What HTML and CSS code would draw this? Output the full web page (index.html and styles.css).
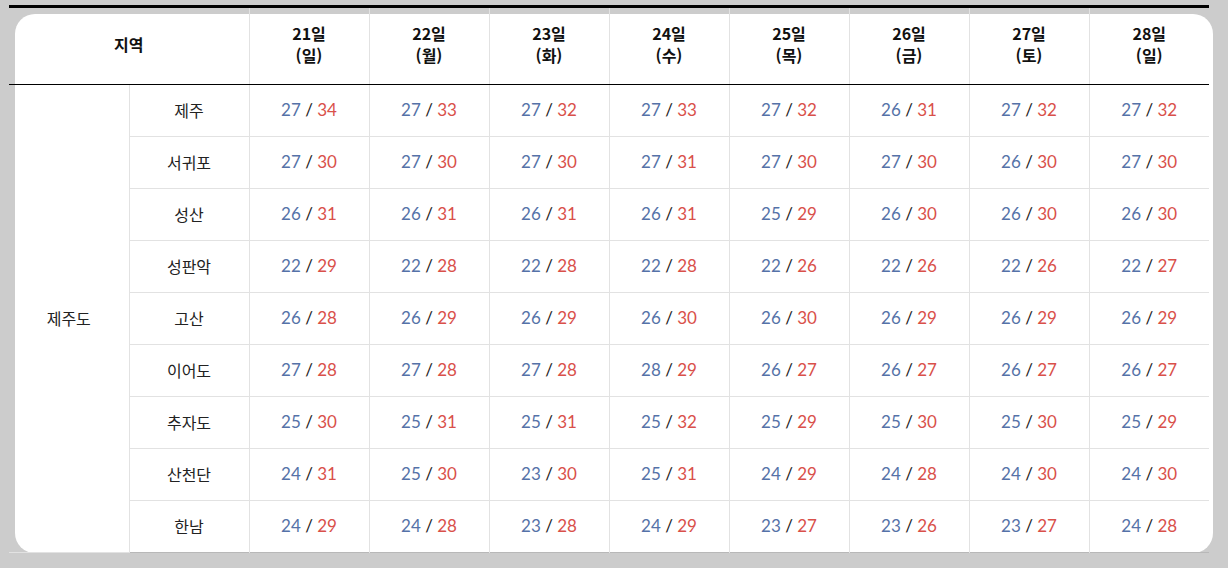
FILE: index.html
```html
<!DOCTYPE html>
<html lang="ko">
<head>
  <meta charset="UTF-8" />
  <meta name="viewport" content="width=device-width, initial-scale=1" />
  <title>제주도 기온 예보</title>
  <link rel="stylesheet" href="styles.css">
</head>
<body>
  <div class="board">
    <table class="forecast">
      <thead>
        <tr>
          <th colspan="2">지역</th>
          <th>21일<br>(일)</th>
          <th>22일<br>(월)</th>
          <th>23일<br>(화)</th>
          <th>24일<br>(수)</th>
          <th>25일<br>(목)</th>
          <th>26일<br>(금)</th>
          <th>27일<br>(토)</th>
          <th>28일<br>(일)</th>
        </tr>
      </thead>
      <tbody>
        <tr>
          <td class="area" rowspan="9">제주도</td>
          <td class="place">제주</td>
          <td><span class="lo">27</span> / <span class="hi">34</span></td>
          <td><span class="lo">27</span> / <span class="hi">33</span></td>
          <td><span class="lo">27</span> / <span class="hi">32</span></td>
          <td><span class="lo">27</span> / <span class="hi">33</span></td>
          <td><span class="lo">27</span> / <span class="hi">32</span></td>
          <td><span class="lo">26</span> / <span class="hi">31</span></td>
          <td><span class="lo">27</span> / <span class="hi">32</span></td>
          <td><span class="lo">27</span> / <span class="hi">32</span></td>
        </tr>
        <tr>
          <td class="place">서귀포</td>
          <td><span class="lo">27</span> / <span class="hi">30</span></td>
          <td><span class="lo">27</span> / <span class="hi">30</span></td>
          <td><span class="lo">27</span> / <span class="hi">30</span></td>
          <td><span class="lo">27</span> / <span class="hi">31</span></td>
          <td><span class="lo">27</span> / <span class="hi">30</span></td>
          <td><span class="lo">27</span> / <span class="hi">30</span></td>
          <td><span class="lo">26</span> / <span class="hi">30</span></td>
          <td><span class="lo">27</span> / <span class="hi">30</span></td>
        </tr>
        <tr>
          <td class="place">성산</td>
          <td><span class="lo">26</span> / <span class="hi">31</span></td>
          <td><span class="lo">26</span> / <span class="hi">31</span></td>
          <td><span class="lo">26</span> / <span class="hi">31</span></td>
          <td><span class="lo">26</span> / <span class="hi">31</span></td>
          <td><span class="lo">25</span> / <span class="hi">29</span></td>
          <td><span class="lo">26</span> / <span class="hi">30</span></td>
          <td><span class="lo">26</span> / <span class="hi">30</span></td>
          <td><span class="lo">26</span> / <span class="hi">30</span></td>
        </tr>
        <tr>
          <td class="place">성판악</td>
          <td><span class="lo">22</span> / <span class="hi">29</span></td>
          <td><span class="lo">22</span> / <span class="hi">28</span></td>
          <td><span class="lo">22</span> / <span class="hi">28</span></td>
          <td><span class="lo">22</span> / <span class="hi">28</span></td>
          <td><span class="lo">22</span> / <span class="hi">26</span></td>
          <td><span class="lo">22</span> / <span class="hi">26</span></td>
          <td><span class="lo">22</span> / <span class="hi">26</span></td>
          <td><span class="lo">22</span> / <span class="hi">27</span></td>
        </tr>
        <tr>
          <td class="place">고산</td>
          <td><span class="lo">26</span> / <span class="hi">28</span></td>
          <td><span class="lo">26</span> / <span class="hi">29</span></td>
          <td><span class="lo">26</span> / <span class="hi">29</span></td>
          <td><span class="lo">26</span> / <span class="hi">30</span></td>
          <td><span class="lo">26</span> / <span class="hi">30</span></td>
          <td><span class="lo">26</span> / <span class="hi">29</span></td>
          <td><span class="lo">26</span> / <span class="hi">29</span></td>
          <td><span class="lo">26</span> / <span class="hi">29</span></td>
        </tr>
        <tr>
          <td class="place">이어도</td>
          <td><span class="lo">27</span> / <span class="hi">28</span></td>
          <td><span class="lo">27</span> / <span class="hi">28</span></td>
          <td><span class="lo">27</span> / <span class="hi">28</span></td>
          <td><span class="lo">28</span> / <span class="hi">29</span></td>
          <td><span class="lo">26</span> / <span class="hi">27</span></td>
          <td><span class="lo">26</span> / <span class="hi">27</span></td>
          <td><span class="lo">26</span> / <span class="hi">27</span></td>
          <td><span class="lo">26</span> / <span class="hi">27</span></td>
        </tr>
        <tr>
          <td class="place">추자도</td>
          <td><span class="lo">25</span> / <span class="hi">30</span></td>
          <td><span class="lo">25</span> / <span class="hi">31</span></td>
          <td><span class="lo">25</span> / <span class="hi">31</span></td>
          <td><span class="lo">25</span> / <span class="hi">32</span></td>
          <td><span class="lo">25</span> / <span class="hi">29</span></td>
          <td><span class="lo">25</span> / <span class="hi">30</span></td>
          <td><span class="lo">25</span> / <span class="hi">30</span></td>
          <td><span class="lo">25</span> / <span class="hi">29</span></td>
        </tr>
        <tr>
          <td class="place">산천단</td>
          <td><span class="lo">24</span> / <span class="hi">31</span></td>
          <td><span class="lo">25</span> / <span class="hi">30</span></td>
          <td><span class="lo">23</span> / <span class="hi">30</span></td>
          <td><span class="lo">25</span> / <span class="hi">31</span></td>
          <td><span class="lo">24</span> / <span class="hi">29</span></td>
          <td><span class="lo">24</span> / <span class="hi">28</span></td>
          <td><span class="lo">24</span> / <span class="hi">30</span></td>
          <td><span class="lo">24</span> / <span class="hi">30</span></td>
        </tr>
        <tr>
          <td class="place">한남</td>
          <td><span class="lo">24</span> / <span class="hi">29</span></td>
          <td><span class="lo">24</span> / <span class="hi">28</span></td>
          <td><span class="lo">23</span> / <span class="hi">28</span></td>
          <td><span class="lo">24</span> / <span class="hi">29</span></td>
          <td><span class="lo">23</span> / <span class="hi">27</span></td>
          <td><span class="lo">23</span> / <span class="hi">26</span></td>
          <td><span class="lo">23</span> / <span class="hi">27</span></td>
          <td><span class="lo">24</span> / <span class="hi">28</span></td>
        </tr>
      </tbody>
    </table>
  </div>
</body>
</html>
```

FILE: styles.css
```css
body {
  margin: 0;
  padding: 5px 0 0 9px;
  background: #cccccc;
  font-family: 'Noto Sans CJK KR', 'Noto Sans', sans-serif;
  color: #111;
}
.board {
  position: relative;
  width: 1200px;
  isolation: isolate;
}
/* white card sitting behind the table */
.board::before {
  content: '';
  position: absolute;
  left: 6px;
  top: 9px;
  width: 1198px;
  height: 539px;
  background: #fff;
  border-radius: 20px;
  z-index: -1;
}
.forecast {
  width: 1200px;
  table-layout: fixed;
  border-collapse: collapse;
  border-top: 3px solid #000;
  border-bottom: 1px solid #b8b8b8;
}
.forecast th {
  height: 72px;
  padding: 0 0 4px;
  font-size: 16px;
  font-weight: 700;
  line-height: 22px;
  border-bottom: 1px solid #000;
  border-left: 1px solid #e2e2e2;
}
.forecast th:first-child {
  border-left: none;
}
.forecast td {
  height: 49px;
  padding: 0 0 2px;
  text-align: center;
  font-family: Lato, 'Noto Sans', sans-serif;
  font-size: 17px;
  color: #222;
  border: 1px solid #e2e2e2;
  border-right: none;
}
.forecast td.area {
  border-left: none;
  border-top: none;
  font-family: 'Noto Sans CJK KR', sans-serif;
  font-size: 16px;
}
.forecast td.place {
  font-family: 'Noto Sans CJK KR', sans-serif;
  font-size: 16px;
}
.forecast tbody tr:first-child td {
  border-top: none;
}
.forecast tbody tr:last-child td {
  border-bottom: none;
}
.lo {
  color: #5572a8;
}
.hi {
  color: #d9504a;
}
```
